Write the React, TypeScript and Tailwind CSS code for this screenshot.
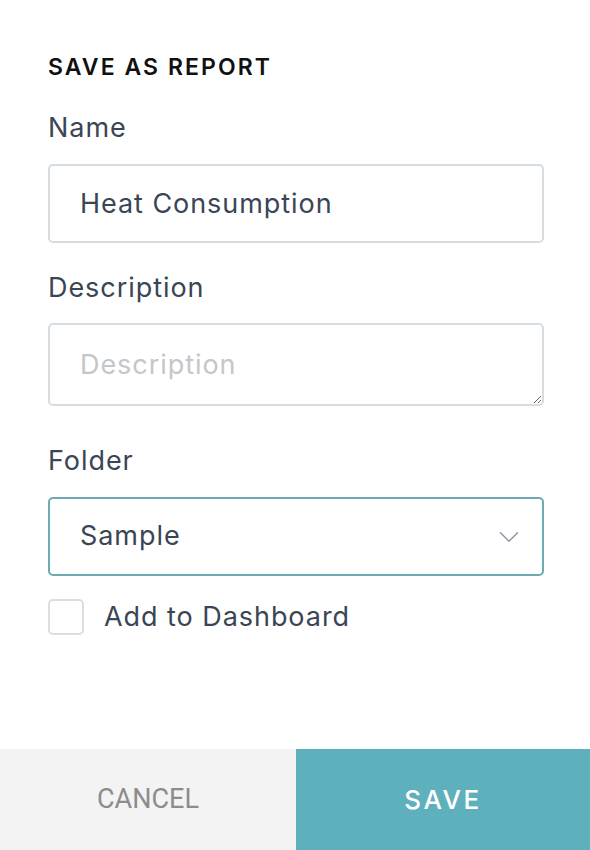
import { ChevronDown } from 'lucide-react'

export default function App() {
  return (
    <main className="flex min-h-[850px] w-full flex-col bg-white font-['Inter',sans-serif] text-[#3a4556]">
      {/* ── Form ── */}
      <section className="flex flex-1 flex-col pl-12 pr-[46px] pt-[52px]">
        <h1 className="text-[23px] font-semibold leading-[30px] tracking-[0.09em] text-[#111111] uppercase">
          Save as Report
        </h1>

        <label className="mt-[30px] text-[27px] leading-[32px] tracking-[0.035em]">Name</label>
        <input
          defaultValue="Heat Consumption"
          className="mt-[20px] h-[79px] w-full rounded-[5px] border-2 border-[#d5dce2] px-[30px] text-[27px] tracking-[0.035em] text-[#3a4556] outline-none"
        />

        <label className="mt-[29px] text-[27px] leading-[32px] tracking-[0.035em]">Description</label>
        <textarea
          placeholder="Description"
          className="mt-[19px] h-[83px] w-full rounded-[5px] border-2 border-[#d5dce2] px-[30px] pt-[24px] text-[27px] leading-[32px] tracking-[0.035em] text-[#3a4556] outline-none placeholder:text-[#c3c7cb]"
        />

        <label className="mt-[39px] text-[27px] leading-[32px] tracking-[0.035em]">Folder</label>
        <div className="relative mt-[20px]">
          <select
            defaultValue="Sample"
            className="h-[79px] w-full appearance-none rounded-[5px] border-2 border-[#6daab4] bg-white px-[30px] text-[27px] tracking-[0.035em] text-[#3a4556] outline-none"
          >
            <option>Sample</option>
          </select>
          <ChevronDown
            className="pointer-events-none absolute right-[18px] top-1/2 -translate-y-1/2 text-[#8a96a3]"
            size={34}
            strokeWidth={1}
          />
        </div>

        <label className="mt-[23px] flex items-center gap-5">
          <span className="h-[36px] w-[36px] rounded-[5px] border-2 border-[#dddddd] bg-white" />
          <span className="text-[27px] leading-[32px] tracking-[0.035em]">Add to Dashboard</span>
        </label>
      </section>

      {/* ── Footer ── */}
      <footer className="grid h-[101px] grid-cols-[296px_1fr]">
        <button className="bg-[#f3f3f3] font-['Roboto',sans-serif] text-[27px] text-[#8c8c8c] uppercase">
          Cancel
        </button>
        <button className="bg-[#5fb0bd] text-[26px] font-medium tracking-[0.1em] text-white uppercase">
          Save
        </button>
      </footer>
    </main>
  )
}
